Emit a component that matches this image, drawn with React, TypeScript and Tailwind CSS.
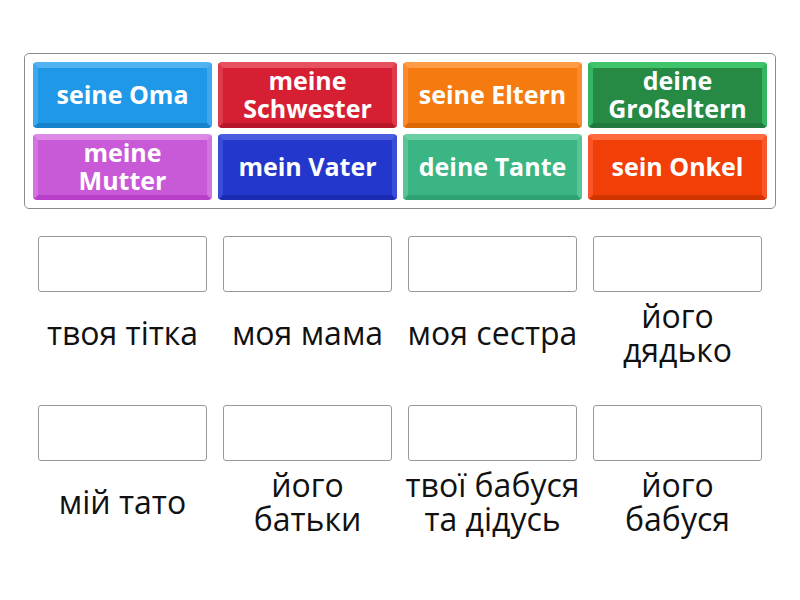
const tiles = [
  {
    label: ["seine Oma"],
    cls: "bg-[#1f98e8] border-t-[#52b3f3] border-x-[#3ea8ef] border-b-[#1682cc]",
  },
  {
    label: ["meine", "Schwester"],
    cls: "bg-[#d71f33] border-t-[#e6505f] border-x-[#df3a4b] border-b-[#b8172a]",
  },
  {
    label: ["seine Eltern"],
    cls: "bg-[#f57a10] border-t-[#ff9c45] border-x-[#fb8b2c] border-b-[#dc6805]",
  },
  {
    label: ["deine", "Großeltern"],
    cls: "bg-[#268a45] border-t-[#3fc46c] border-x-[#35b461] border-b-[#1f7a3b]",
  },
  {
    label: ["meine", "Mutter"],
    cls: "bg-[#c95ad7] border-t-[#dc8ae6] border-x-[#d273df] border-b-[#b83fca]",
  },
  {
    label: ["mein Vater"],
    cls: "bg-[#2337cc] border-t-[#4a5ddf] border-x-[#3a4dd8] border-b-[#1b2cb2]",
  },
  {
    label: ["deine Tante"],
    cls: "bg-[#3cb584] border-t-[#6bcfa4] border-x-[#57c596] border-b-[#2fa173]",
  },
  {
    label: ["sein Onkel"],
    cls: "bg-[#f23f08] border-t-[#ff6b3c] border-x-[#f9552a] border-b-[#d23400]",
  },
];

const targets = [
  ["твоя тітка"],
  ["моя мама"],
  ["моя сестра"],
  ["його", "дядько"],
  ["мій тато"],
  ["його", "батьки"],
  ["твої бабуся", "та дідусь"],
  ["його", "бабуся"],
];

export default function App() {
  return (
    <div className="w-[800px] h-[600px] bg-white font-['Open_Sans','Noto_Sans',sans-serif]">
      <div className="pt-[53px] px-[24px]">
        <div className="grid grid-cols-4 gap-[6px] rounded-[5px] border border-[#8c8c8c] p-[8px]">
          {tiles.map((tile) => (
            <div
              key={tile.label.join(" ")}
              className={`flex h-[66px] flex-col items-center justify-center rounded-[4px] border-t-[6px] border-x-[5px] border-b-[5px] pb-[3px] text-[25px] font-bold leading-[28px] text-white ${tile.cls}`}
            >
              {tile.label.map((line) => (
                <span key={line}>{line}</span>
              ))}
            </div>
          ))}
        </div>
      </div>

      <div className="mx-[30px] mt-[27px] grid grid-cols-4 gap-y-[38px]">
        {targets.map((lines) => (
          <div key={lines.join(" ")} className="flex flex-col items-center">
            <div className="h-[56px] w-[169px] rounded-[3px] border border-[#999999] bg-white" />
            <div className="mt-[7px] flex h-[68px] flex-col items-center justify-center whitespace-nowrap text-[32px] leading-[34px] text-[#111111]">
              {lines.map((line) => (
                <span key={line}>{line}</span>
              ))}
            </div>
          </div>
        ))}
      </div>
    </div>
  );
}
